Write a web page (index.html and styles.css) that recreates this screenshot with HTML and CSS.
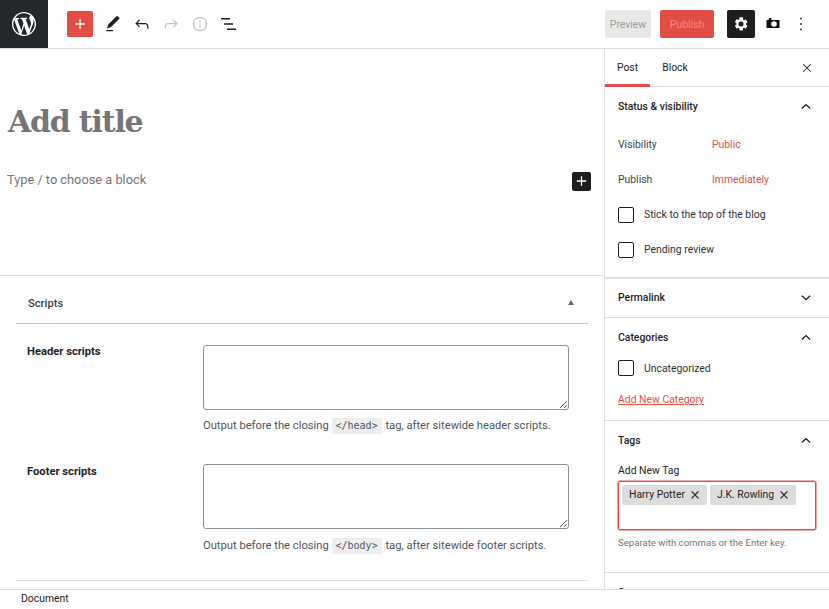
FILE: index.html
```html
<!DOCTYPE html>
<html lang="en">
<head>
<meta charset="utf-8">
<title>Edit Post</title>
<link rel="stylesheet" href="styles.css">
</head>
<body>
<div class="app">
  <header class="topbar">
    <a class="wp-logo" href="#" aria-label="WordPress">
      <svg viewBox="0 0 20 20" width="24" height="24"><path fill="#fff" d="M20 10c0-5.51-4.49-10-10-10C4.480 0 0 4.490 0 10c0 5.520 4.480 10 10 10 5.510 0 10-4.480 10-10zM7.780 15.370L4.370 6.220c.55-.02 1.170-.08 1.170-.08.5-.06.44-1.130-.06-1.110 0 0-1.450.11-2.370.11-.18 0-.37 0-.58-.01C4.120 2.690 6.890 1.050 10 1.050c2.320 0 4.430.89 6.010 2.340-.67-.11-1.630.39-1.630 1.550 0 .72.44 1.330.89 2.050.35.61.55 1.360.55 2.460 0 1.490-1.400 5-1.400 5l-3.030-8.370c.54-.02.82-.17.82-.17.5-.05.44-1.250-.06-1.220 0 0-1.440.12-2.380.12-.87 0-2.330-.12-2.330-.12-.5-.03-.56 1.200-.06 1.220l.92.080 1.260 3.410zM17.410 10c.24-.64.74-1.870.43-4.250.7 1.290 1.050 2.710 1.050 4.250 0 3.290-1.730 6.240-4.400 7.780.97-2.590 1.940-5.200 2.920-7.780zM6.100 18.090C3.120 16.650 1.110 13.530 1.110 10c0-1.300.23-2.480.72-3.590C3.250 10.300 4.670 14.200 6.100 18.090zm4.030-6.630l2.580 6.980c-.86.29-1.760.45-2.710.45-.79 0-1.570-.11-2.290-.33.81-2.380 1.620-4.740 2.420-7.100z"/></svg>
    </a>
    <div class="tools">
      <button class="tool tool-add" aria-label="Add block">
        <svg viewBox="0 0 24 24" width="20" height="20"><path fill="#fff" d="M18 11.200h-5.200V6h-1.600v5.200H6v1.600h5.200V18h1.600v-5.200H18z"/></svg>
      </button>
      <button class="tool" aria-label="Tools">
        <svg viewBox="0 0 24 24" width="20" height="20"><path fill="#1e1e1e" d="M20.100 5.100L16.900 2 6.200 12.700l-1.300 4.400 4.500-1.300L20.100 5.100zM4 20.800h8v-1.500H4v1.500z"/></svg>
      </button>
      <button class="tool" aria-label="Undo">
        <svg viewBox="0 0 24 24" width="20" height="20"><path fill="#1e1e1e" d="M18.300 11.700c-.6-.6-1.400-.9-2.300-.9H6.700l2.900-3.300-1.100-1-4.500 5L8.500 16l1-1-2.700-2.700H16c.5 0 .9.200 1.300.5 1 1 1 3.400 1 4.500v.3h1.500v-.2c0-1.500 0-4.300-1.500-5.700z"/></svg>
      </button>
      <button class="tool is-off" aria-label="Redo">
        <svg viewBox="0 0 24 24" width="20" height="20"><path fill="#c4c4c4" d="M15.600 6.500l-1.100 1 2.900 3.300H8c-.9 0-1.700.3-2.300.9-1.400 1.500-1.400 4.200-1.400 5.600v.2h1.500v-.3c0-1.100 0-3.500 1-4.500.3-.3.700-.5 1.300-.5h9.200L14.500 15l1.100 1.100 4.600-4.600-4.600-5z"/></svg>
      </button>
      <button class="tool is-off" aria-label="Details">
        <svg viewBox="0 0 24 24" width="20" height="20"><path fill="#c4c4c4" d="M12 4.750a7.250 7.250 0 100 14.500 7.250 7.250 0 000-14.500zM3.250 12a8.750 8.750 0 1117.500 0 8.750 8.750 0 01-17.500 0zM12 8a1 1 0 100 2 1 1 0 000-2zm-.75 3.500h1.500V16h-1.500v-4.500z"/></svg>
      </button>
      <button class="tool" aria-label="Outline">
        <svg viewBox="0 0 24 24" width="24" height="24"><path fill="#1e1e1e" d="M4 6h9v1.500H4zM7 11.250h9v1.500H7zM10 16.500h9V18h-9z"/></svg>
      </button>
    </div>
    <div class="actions">
      <button class="btn btn-preview">Preview</button>
      <button class="btn btn-publish">Publish</button>
      <button class="tool tool-settings" aria-label="Settings">
        <svg viewBox="0 0 24 24" width="20" height="20"><path fill="#fff" fill-rule="evenodd" d="M19.400 13.500l-1.300-.7c.1-.5.100-1.100 0-1.600l1.300-.7c.4-.2.500-.7.300-1l-1.500-2.600c-.2-.4-.7-.5-1-.3l-1.300.8c-.4-.3-.9-.6-1.400-.8V4.800c0-.4-.3-.8-.8-.8H10.900c-.4 0-.8.300-.8.800v1.600c-.5.200-1 .5-1.400.8l-1.300-.8c-.4-.2-.8-.1-1 .3L4.900 9.300c-.2.400-.1.800.3 1l1.300.7c-.1.500-.1 1.100 0 1.600l-1.300.8c-.4.200-.5.700-.3 1l1.500 2.600c.2.400.7.500 1 .3l1.300-.8c.4.300.9.600 1.400.8v1.600c0 .4.300.8.800.8h2.700c.4 0 .8-.3.800-.8v-1.600c.5-.2 1-.5 1.400-.8l1.300.8c.4.200.8.100 1-.3l1.400-2.600c.2-.3.100-.8-.3-1zM12 15a3 3 0 110-6 3 3 0 010 6z"/></svg>
      </button>
      <button class="tool tool-snapshot" aria-label="Snapshot">
        <svg viewBox="0 0 24 24" width="24" height="24"><path fill="#111" fill-rule="evenodd" d="M5.500 8h2l.7-2h2.500l-.7 2h8.500v8h-13zM13 9.200a2.800 2.800 0 100 5.600 2.800 2.800 0 000-5.600z"/></svg>
      </button>
      <button class="tool tool-options" aria-label="Options">
        <svg viewBox="0 0 24 24" width="24" height="24"><g fill="#333"><circle cx="12" cy="6.500" r="1"/><circle cx="12" cy="12" r="1"/><circle cx="12" cy="17.500" r="1"/></g></svg>
      </button>
    </div>
  </header>

  <div class="workspace">
    <main class="editor">
      <section class="canvas">
        <h1 class="title">Add title</h1>
        <div class="prompt">
          <span>Type / to choose a block</span>
          <button class="inline-add" aria-label="Add block">
            <svg viewBox="0 0 24 24" width="20" height="20"><path fill="#fff" d="M18 11.200h-5.200V6h-1.600v5.200H6v1.600h5.200V18h1.600v-5.200H18z"/></svg>
          </button>
        </div>
      </section>
      <section class="metabox">
        <div class="metabox-inner">
          <div class="metabox-head">
            <h2>Scripts</h2>
            <span class="caret-up"></span>
          </div>
          <div class="field">
            <label>Header scripts</label>
            <div class="field-main">
              <textarea></textarea>
              <p>Output before the closing <code>&lt;/head&gt;</code> tag, after sitewide header scripts.</p>
            </div>
          </div>
          <div class="field">
            <label>Footer scripts</label>
            <div class="field-main">
              <textarea></textarea>
              <p>Output before the closing <code>&lt;/body&gt;</code> tag, after sitewide footer scripts.</p>
            </div>
          </div>
        </div>
      </section>
    </main>

    <aside class="sidebar">
      <div class="tabs">
        <span class="tab is-active">Post</span>
        <span class="tab">Block</span>
        <svg class="close" viewBox="0 0 24 24" width="14" height="14"><path fill="#1e1e1e" d="M13 11.800l6.100-6.300-1-1-6.100 6.200-6-6.200-1 1 6 6.300-6.200 6.100 1 1 6.200-6.100 6.300 6.100 1-1z"/></svg>
      </div>

      <section class="panel panel-status">
        <div class="panel-head"><h3>Status &amp; visibility</h3><svg viewBox="0 0 24 24" width="20" height="20"><path fill="#1e1e1e" d="M6.500 14.500L12 9.400l5.500 5.100-1 1.100-4.500-4.200-4.500 4.200z"/></svg></div>
        <div class="row"><span class="row-label">Visibility</span><a href="#">Public</a></div>
        <div class="row"><span class="row-label">Publish</span><a href="#">Immediately</a></div>
        <label class="check"><span class="box"></span>Stick to the top of the blog</label>
        <label class="check"><span class="box"></span>Pending review</label>
      </section>

      <section class="panel panel-permalink">
        <div class="panel-head"><h3>Permalink</h3><svg viewBox="0 0 24 24" width="20" height="20"><path fill="#1e1e1e" d="M17.500 9.900L12 15l-5.500-5.100 1-1.100 4.500 4.200 4.500-4.200z"/></svg></div>
      </section>

      <section class="panel panel-categories">
        <div class="panel-head"><h3>Categories</h3><svg viewBox="0 0 24 24" width="20" height="20"><path fill="#1e1e1e" d="M6.500 14.500L12 9.400l5.500 5.100-1 1.100-4.500-4.200-4.500 4.200z"/></svg></div>
        <label class="check"><span class="box"></span>Uncategorized</label>
        <a class="add-cat" href="#">Add New Category</a>
      </section>

      <section class="panel panel-tags">
        <div class="panel-head"><h3>Tags</h3><svg viewBox="0 0 24 24" width="20" height="20"><path fill="#1e1e1e" d="M6.500 14.500L12 9.400l5.500 5.100-1 1.100-4.500-4.200-4.500 4.200z"/></svg></div>
        <div class="tag-label">Add New Tag</div>
        <div class="tag-input">
          <span class="tag">Harry Potter<svg viewBox="0 0 24 24" width="12" height="12"><path fill="#1e1e1e" stroke="#1e1e1e" d="M13 11.800l6.100-6.300-1-1-6.100 6.200-6-6.200-1 1 6 6.300-6.200 6.100 1 1 6.200-6.100 6.300 6.100 1-1z"/></svg></span>
          <span class="tag">J.K. Rowling<svg viewBox="0 0 24 24" width="12" height="12"><path fill="#1e1e1e" stroke="#1e1e1e" d="M13 11.800l6.100-6.300-1-1-6.100 6.200-6-6.200-1 1 6 6.300-6.200 6.100 1 1 6.200-6.100 6.300 6.100 1-1z"/></svg></span>
        </div>
        <p class="tag-help">Separate with commas or the Enter key.</p>
      </section>

      <section class="panel panel-next">
        <div class="panel-head"><h3>Sources</h3></div>
      </section>
    </aside>
  </div>

  <footer class="statusbar">Document</footer>
</div>
</body>
</html>
```

FILE: styles.css
```css
* { box-sizing: border-box; }

html, body {
  margin: 0;
  height: 100%;
  overflow: hidden;
  background: #fff;
}

body {
  font-family: Roboto, "Liberation Sans", sans-serif;
  font-size: 10.4px;
  color: #1e1e1e;
}

button {
  border: 0;
  background: none;
  padding: 0;
  font: inherit;
}

.app {
  display: flex;
  flex-direction: column;
  height: 609px;
}

/* Top toolbar */
.topbar {
  flex: 0 0 49px;
  display: flex;
  align-items: center;
  border-bottom: 1px solid #e0e0e0;
}

.wp-logo {
  flex: 0 0 48px;
  height: 48px;
  display: flex;
  align-items: center;
  justify-content: center;
  background: #23282d;
}

.tools {
  display: flex;
  align-items: center;
  gap: 3px;
  margin-left: 19px;
}

.tool {
  width: 26px;
  height: 26px;
  display: flex;
  align-items: center;
  justify-content: center;
  border-radius: 2px;
}

.tool-add {
  margin-right: 4px;
  background: #e24e45;
}

.actions {
  margin-left: auto;
  display: flex;
  align-items: center;
  padding-right: 15px;
}

.btn {
  height: 28px;
  border-radius: 2px;
  font-size: 10.4px;
}

.btn-preview {
  width: 46px;
  background: #e8e8e8;
  color: #a09d9b;
}

.btn-publish {
  width: 54px;
  margin-left: 9px;
  background: #e24e45;
  color: #f08a83;
}

.tool-settings {
  width: 28px;
  height: 28px;
  margin-left: 13px;
  background: #1e1e1e;
}

.tool-snapshot { margin-left: 5px; }
.tool-options { margin-left: 2px; }

/* Main area */
.workspace {
  flex: 1;
  display: flex;
  min-height: 0;
}

.editor {
  flex: 0 0 604px;
  display: flex;
  flex-direction: column;
  min-width: 0;
}

.canvas {
  flex: 0 0 227px;
  border-bottom: 1px solid #e0e0e0;
}

.title {
  margin: 53px 0 0 8px;
  font-family: "DejaVu Serif", serif;
  font-weight: 700;
  font-size: 30px;
  line-height: 40px;
  letter-spacing: -1.2px;
  color: #757575;
}

.prompt {
  display: flex;
  align-items: center;
  justify-content: space-between;
  margin: 27px 0 0 7px;
  padding-right: 13px;
  height: 20px;
  font-size: 12.8px;
  color: #757575;
}

.inline-add {
  width: 19px;
  height: 19px;
  margin-top: 4px;
  display: flex;
  align-items: center;
  justify-content: center;
  background: #1e1e1e;
  border-radius: 2px;
}

.metabox {
  flex: 1;
  min-height: 0;
  padding: 0 16px;
}

.metabox-inner {
  height: 305px;
  border-bottom: 1px solid #e0e0e0;
}

.metabox-head {
  height: 48px;
  padding: 8px 12px 0;
  display: flex;
  align-items: center;
  justify-content: space-between;
  border-bottom: 1px solid #c3c4c7;
}

.metabox-head h2 {
  margin: 0;
  font-size: 11.2px;
  font-weight: 500;
  color: #3c434a;
}

.caret-up {
  width: 0;
  height: 0;
  margin: -2px 2px 0 0;
  border-left: 3.5px solid transparent;
  border-right: 3.5px solid transparent;
  border-bottom: 5px solid #5f6a75;
}

.field {
  display: flex;
  margin-top: 21px;
  height: 99px;
}

.field + .field { margin-top: 20px; }

.field label {
  flex: 0 0 187px;
  padding: 0 0 0 11px;
  font-size: 11.2px;
  line-height: 14px;
  font-weight: 700;
  color: #1d2327;
}

.field + .field label { padding-top: 1px; }

.field-main { flex: 0 0 366px; }

.field textarea {
  display: block;
  width: 366px;
  height: 65px;
  border: 1px solid #8c8f94;
  border-radius: 3px;
  background: #fff;
  margin: 0;
}

.field p {
  margin: 8px 0 0;
  font-size: 11.2px;
  line-height: 16px;
  color: #50575e;
}

.field + .field p { margin-top: 9px; }

.field code {
  display: inline-block;
  padding: 0 4px;
  margin-right: 1px;
  font-family: "DejaVu Sans Mono", monospace;
  font-size: 10px;
  line-height: 16px;
  background: #eee;
  color: #50575e;
}

/* Settings sidebar */
.sidebar {
  flex: 1;
  min-width: 0;
  border-left: 1px solid #e0e0e0;
  overflow: hidden;
}

.tabs {
  height: 38px;
  display: flex;
  align-items: stretch;
  border-bottom: 1px solid #e0e0e0;
}

.tab {
  width: 45px;
  display: flex;
  align-items: center;
  justify-content: center;
  font-size: 10.4px;
  border-bottom: 3px solid transparent;
  height: 38px;
  padding-top: 1px;
}

.tab.is-active { border-bottom-color: #e24e45; }
.tab + .tab { width: 50px; }

.close { margin: 12px 15px 0 auto; }

.panel {
  border-bottom: 1px solid #e0e0e0;
  padding: 0 12px 0 13px;
}

.panel-head {
  display: flex;
  align-items: center;
  justify-content: space-between;
  height: 39px;
}

.panel-head h3 {
  margin: 0;
  font-size: 10.4px;
  font-weight: 500;
}

.panel-head svg { margin-right: 1px; }

.panel-status {
  height: 192px;
  border-bottom-width: 2px;
}

.panel-status .panel-head {
  height: 38px;
  margin-bottom: 2px;
}

.row {
  display: flex;
  align-items: center;
  height: 35px;
}

.row-label {
  flex: 0 0 94px;
  color: #3c434a;
}

.row a {
  color: #e24e45;
  text-decoration: none;
}

.check {
  display: flex;
  align-items: center;
  height: 35px;
  color: #2c3338;
}

.box {
  width: 16px;
  height: 16px;
  margin-right: 10px;
  border: 1px solid #1e1e1e;
  border-radius: 2px;
  background: #fff;
}

.panel-permalink { height: 39px; }
.panel-permalink .panel-head { height: 37px; }

.panel-categories { height: 103px; }
.panel-categories .panel-head { height: 38px; }
.panel-categories .check { height: 24px; }

.add-cat {
  display: block;
  margin-top: 13px;
  color: #e24e45;
  line-height: 14px;
}

.panel-tags { height: 152px; }
.panel-tags .panel-head { height: 38px; }

.tag-label {
  margin-top: 5px;
  line-height: 14px;
  color: #1e1e1e;
}

.tag-input {
  display: flex;
  align-items: flex-start;
  gap: 3px;
  height: 49px;
  margin: 3px 1px 0 0;
  padding: 3px;
  border: 1px solid #e24e45;
  box-shadow: 0 0 0 .5px #e24e45;
  border-radius: 2px;
}

.tag {
  display: flex;
  align-items: center;
  justify-content: space-between;
  height: 20px;
  padding: 0 6px 1px 7px;
  font-size: 10.4px;
  background: #ddd;
  border-radius: 2px;
}

.tag:first-child { width: 85px; }
.tag:nth-child(2) { width: 86px; }

.tag-help {
  margin: 6px 0 0;
  font-size: 9.6px;
  line-height: 14px;
  color: #757575;
}

.panel-next { height: 40px; }

/* Bottom status bar */
.statusbar {
  flex: 0 0 20px;
  padding: 1px 0 0 21px;
  border-top: 1px solid #e0e0e0;
  background: #fff;
  font-size: 10.4px;
  line-height: 16px;
  color: #1e1e1e;
}
```
